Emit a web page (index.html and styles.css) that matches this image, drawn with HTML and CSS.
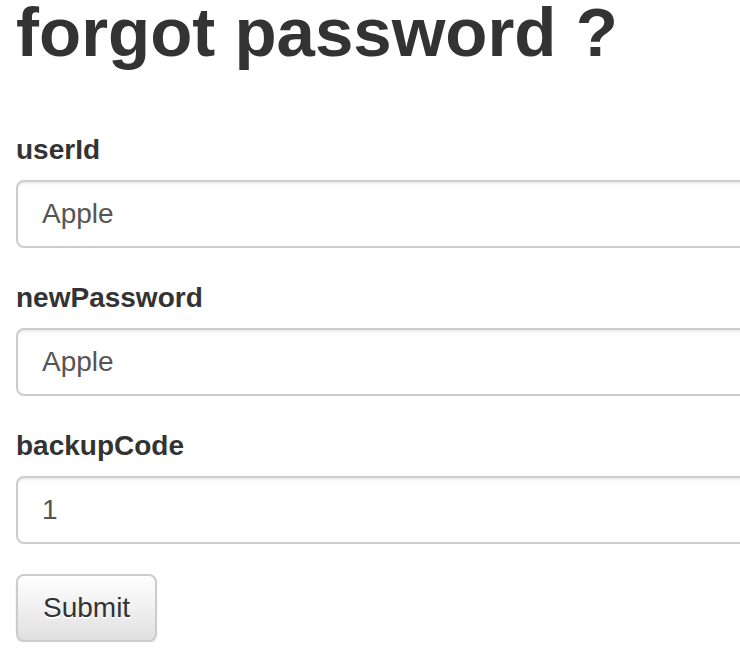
FILE: index.html
```html
<!DOCTYPE html>
<html>
<head>
<meta charset="utf-8">
<title>forgot password ?</title>
<link rel="stylesheet" href="styles.css">
</head>
<body>
<h1 class="title">forgot password ?</h1>
<form class="form">
  <div class="form-group">
    <label class="label" for="userId">userId</label>
    <input class="input" id="userId" type="text" value="Apple">
  </div>
  <div class="form-group">
    <label class="label" for="newPassword">newPassword</label>
    <input class="input" id="newPassword" type="text" value="Apple">
  </div>
  <div class="form-group">
    <label class="label" for="backupCode">backupCode</label>
    <input class="input" id="backupCode" type="text" value="1">
  </div>
  <button class="btn" type="button">Submit</button>
</form>
</body>
</html>
```
FILE: styles.css
```css
html {
  overflow: hidden;
}
body {
  margin: 0;
  padding: 0 0 0 16px;
  background: #fff;
  color: #333;
  font-family: "Liberation Sans", Arial, Helvetica, sans-serif;
}
.title {
  margin: 0 0 64px;
  font-size: 69px;
  line-height: 66px;
  font-weight: bold;
  color: #333;
}
.form {
  width: 800px;
}
.form-group {
  margin-bottom: 30px;
}
.label {
  display: block;
  margin-bottom: 10px;
  font-size: 28px;
  line-height: 40px;
  font-weight: bold;
  color: #333;
}
.input {
  display: block;
  box-sizing: border-box;
  width: 100%;
  height: 68px;
  margin: 0;
  padding: 12px 24px;
  font-family: inherit;
  font-size: 28px;
  line-height: 40px;
  color: #555;
  background: #fff;
  border: 2px solid #ccc;
  border-radius: 8px;
  box-shadow: inset 0 2px 2px rgba(0, 0, 0, 0.075);
  outline: none;
}
.btn {
  display: inline-block;
  box-sizing: border-box;
  height: 68px;
  margin: 0;
  padding: 12px 25px;
  font-family: inherit;
  font-size: 28px;
  line-height: 40px;
  color: #333;
  text-shadow: 0 2px 0 #fff;
  background: linear-gradient(to bottom, #fff 0%, #e0e0e0 100%);
  border: 2px solid #ccc;
  border-radius: 8px;
  box-shadow: inset 0 2px 0 rgba(255, 255, 255, 0.15), 0 2px 2px rgba(0, 0, 0, 0.075);
}
```
